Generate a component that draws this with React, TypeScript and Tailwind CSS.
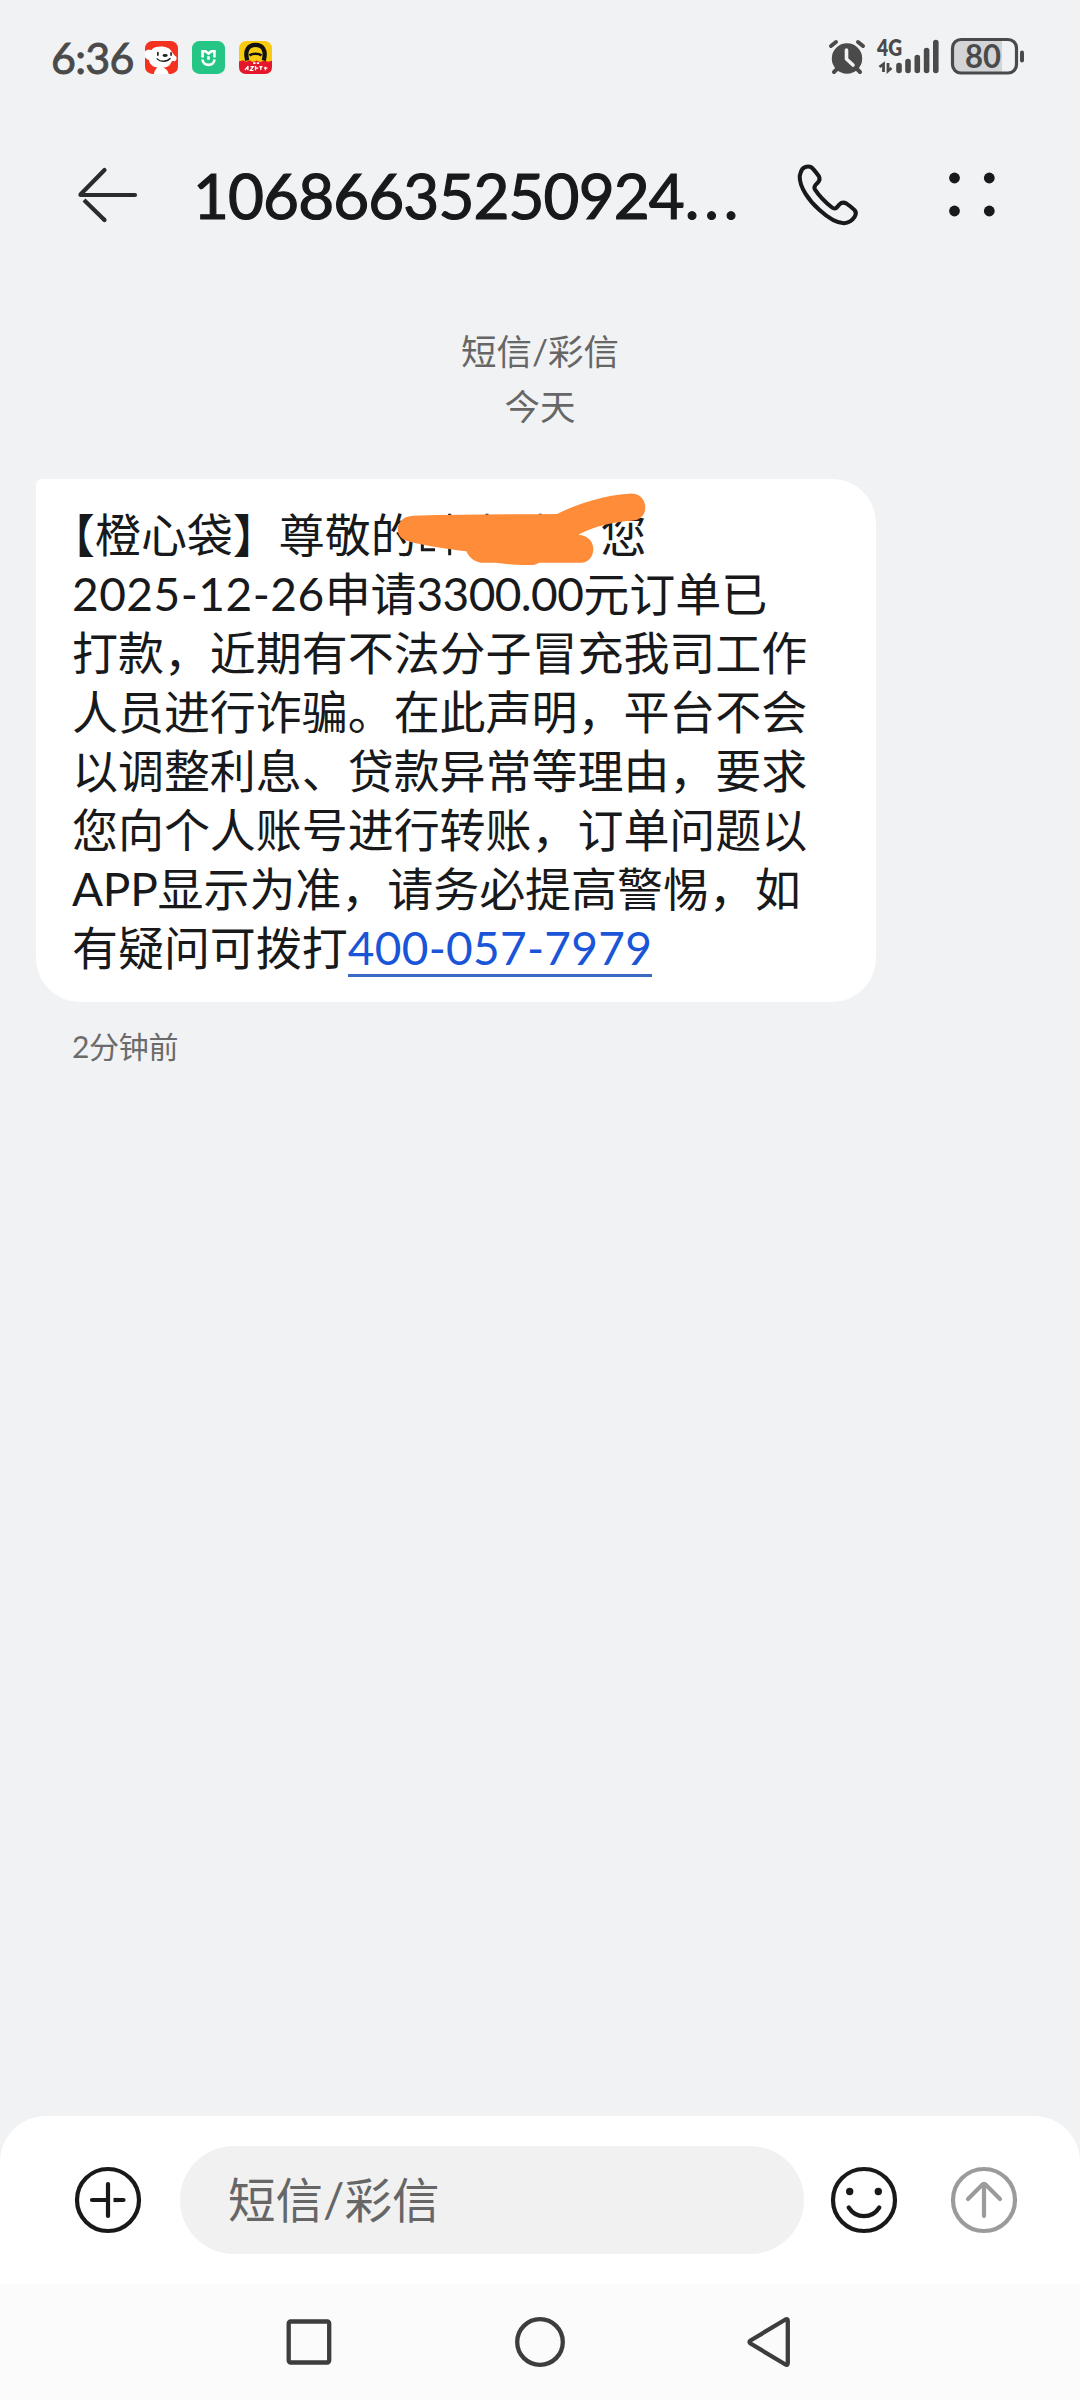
import React from 'react';

const MESSAGE_LINES: { text: string; className: string }[][] = [
  [{ text: '2025-12-26', className: 'tracking-[0.5px]' }, { text: '申请', className: '' }, { text: '3300.00', className: 'tracking-[-0.6px]' }, { text: '元订单已', className: '' }],
  [{ text: '打款，近期有不法分子冒充我司工作', className: '' }],
  [{ text: '人员进行诈骗。在此声明，平台不会', className: '' }],
  [{ text: '以调整利息、贷款异常等理由，要求', className: '' }],
  [{ text: '您向个人账号进行转账，订单问题以', className: '' }],
  [{ text: 'APP', className: 'tracking-[-0.3px]' }, { text: '显示为准，请务必提高警惕，如', className: '' }],
];

const StatusBar = () => (
  <div className="flex h-[116px] items-center justify-between pb-[2px] pl-[51px] pr-[56px] text-[#4a4a4a]">
    <div className="flex items-center">
      <span className="w-[93.500px] text-[43px] leading-none tracking-[-0.7px] [-webkit-text-stroke:0.9px_#4a4a4a]">6:36</span>
      <div className="flex gap-[14px]">
        <svg width="33" height="33" viewBox="0 0 100 100">
          <rect width="100" height="100" rx="22" fill="#f5311f" />
          <path d="M0 32C8 24 16 28 20 27C28 14 68 13 78 28C84 35 89 46 95 48C97 54 95 60 90 61C84 61 82 60 80 64C76 76 66 80 56 81C67 86 70 92 72 100H27C28 91 32 85 38 80C22 78 14 70 12 58C7 55 1 54 0 48Z" fill="#fff" />
          <ellipse cx="61" cy="44" rx="8" ry="4.500" fill="#222" />
          <path d="M39 35V43M79 36V43" stroke="#222" strokeWidth="5" strokeLinecap="round" />
          <path d="M37 54C46 64 67 64 76 53" fill="none" stroke="#222" strokeWidth="4" strokeLinecap="round" />
        </svg>
        <svg width="33" height="33" viewBox="0 0 100 100">
          <rect width="100" height="100" rx="22" fill="#25c685" />
          <path d="M32 50V31H41L50 38L59 31H68V50" fill="none" stroke="#fff" strokeWidth="8" />
          <path d="M32 56C32 78 68 78 68 56M50 46V57" fill="none" stroke="#fff" strokeWidth="8" />
        </svg>
        <svg width="33" height="33" viewBox="0 0 100 100">
          <rect width="100" height="100" rx="22" fill="#f9cb10" />
          <path d="M0 62L12 58L22 63L32 58L42 64L54 59L64 64L78 59L88 63L100 60V78Q100 100 78 100H22Q0 100 0 78Z" fill="#e5182b" />
          <path d="M25 59C16 26 30 12 50 12C70 12 84 26 75 59" fill="none" stroke="#111" strokeWidth="13" />
          <path d="M32 44C40 37 60 37 68 44" fill="none" stroke="#111" strokeWidth="8" />
          <path d="M35 31C42 24 58 24 65 31" fill="none" stroke="#f9cb10" strokeWidth="4" />
          <path d="M18 88L28 76M27 76V89M35 78H43L35 89H44M50 76V89M50 82H58M62 78H71M66 76V88M76 82H86M80 78V89" stroke="#fff" strokeWidth="4" />
          <path d="M43 67H50M54 67H61" stroke="#fff" strokeWidth="5" />
        </svg>
      </div>
    </div>

    <svg width="196" height="58" viewBox="828 28 196 58" fill="none" stroke="currentColor" strokeLinecap="round">
      <circle cx="847" cy="58.500" r="15.200" fill="currentColor" stroke="none" />
      <path d="M831 46L836 42M858 42L863 46M837 69L834 72M857 69L860 72" strokeWidth="4" />
      <path d="M846.500 50V59L853 65" stroke="#f1f2f4" strokeWidth="3.600" strokeLinejoin="round" />
      <text x="877" y="55.700" fontSize="22" fontWeight="800" stroke="none" fill="currentColor" textLength="25" lengthAdjust="spacingAndGlyphs">4G</text>
      <path d="M883.500 72V64L879.500 67M888 63V71L891.500 68" strokeWidth="2.800" strokeLinecap="butt" />
      <path d="M899 65.500V70.500M908 61.500V70.500M917.300 57.500V70.500M926.600 50.500V70.500M935.800 42.500V70.500" strokeWidth="5.600" />
      <path d="M961 41H1002V72H961Q954 72 954 65V48Q954 41 961 41Z" fill="#d3d4d5" stroke="none" />
      <rect x="952.500" y="39.500" width="64" height="33.500" rx="8.500" strokeWidth="3.200" />
      <path d="M1022 52.500V60.500" strokeWidth="4" />
      <text x="965" y="67.500" fontSize="32" fontWeight="700" stroke="none" fill="currentColor" textLength="36" lengthAdjust="spacingAndGlyphs">80</text>
    </svg>
  </div>
);

const Header = () => (
  <header className="flex h-[158px] items-center pl-[76px] pr-[83px] text-[#18191b]">
    <svg width="64" height="60" viewBox="76 165 64 60" fill="none" stroke="#2a2b2d" strokeWidth="4.200" strokeLinecap="round" strokeLinejoin="round">
      <path d="M104.500 170L80.500 194.500V195H135" />
      <path d="M104.500 220L84 200" strokeLinecap="butt" />
      <path d="M104.500 220L104 219.500" />
    </svg>
    <h1 className="ml-[53px] w-[603px] whitespace-nowrap text-[62px] leading-none tracking-[-0.9px] [-webkit-text-stroke:1.2px_#18191b]">
      10686635250924<span className="ml-px tracking-[4.800px]">...</span>
    </h1>
    <svg width="64" height="64" viewBox="770 100 190 190" fill="none" stroke="currentColor" strokeWidth="12" strokeLinejoin="round">
      <path d="M784 128C788 112 804 107 816 113C823 119 831 130 838 139C842 146 839 153 835 158L828 165C824 170 823 173 826 178C839 198 858 217 877 232C882 236 888 236 892 231L899 223C905 217 913 217 919 220C928 226 936 232 944 240C949 246 948 254 944 260C936 272 925 278 912 279C890 278 864 262 839 239C808 211 780 172 781 139Z" />
    </svg>
    <svg className="ml-auto" width="48" height="46" viewBox="949 171 48 46" fill="currentColor">
      <circle cx="954.500" cy="177" r="5.400" />
      <circle cx="989.300" cy="177" r="5.400" />
      <circle cx="954.500" cy="210" r="5.400" />
      <circle cx="989.300" cy="210" r="5.400" />
    </svg>
  </header>
);

const Bubble = () => (
  <div className="relative ml-9 h-[523px] w-[840px] rounded-[44px] rounded-tl-[6px] bg-white pl-9 pt-[26px] text-[46px] leading-[59px] tracking-[-0.05px] whitespace-nowrap text-[#18191b]">
    <p className="flex">
      <span className="-ml-[23px]">【橙心袋】尊敬的</span>
      <span className="ml-[184px]">您</span>
    </p>
    {MESSAGE_LINES.map((line, i) => (
      <p key={i}>
        {line.map((part, j) => (
          <span key={j} className={part.className}>{part.text}</span>
        ))}
      </p>
    ))}
    <p className="flex">
      有疑问可拨打
      <a className="h-[59px] border-b-[3px] border-[#3a6bc4] tracking-[0.3px] text-[#1a55d8]">400-057-7979</a>
    </p>

    {/* marker stroke over the recipient */}
    <svg className="absolute left-[360px] top-[13px]" width="250" height="75" viewBox="45 95 750 225">
      <path d="M124 250V268H162M206 160V285M318 160V180M478 160V180" fill="none" stroke="#18191b" strokeWidth="9" />
      <path d="M50 207C51 184 66 168 98 166C230 163 380 162 528 161C580 135 660 105 745 100C775 98 791 115 793 140C793 165 778 180 752 181C700 185 645 195 592 223C622 226 637 243 637 268C635 291 622 306 600 307H474C462 314 452 315 438 314C400 314 370 310 345 307H300C276 303 264 290 256 273C200 265 145 258 98 247C65 242 50 228 50 207Z" fill="#ff8c38" />
    </svg>
  </div>
);

const Composer = () => (
  <div className="flex h-[168px] items-center rounded-t-[46px] bg-white pl-[74px] pr-[62px] text-[#18191b]">
    <svg width="68" height="68" viewBox="-34 -34 68 68" fill="none" stroke="currentColor" strokeWidth="4.200" strokeLinecap="round">
      <circle r="31" />
      <path d="M0 -16V16M-16 0H0M15.500 0H8" />
      <path d="M10 0H5.500" strokeLinecap="butt" />
    </svg>
    <div className="ml-[38px] flex h-[108px] w-[624px] items-center rounded-full bg-[#f1f1f1] pl-12 text-[47.500px] leading-none text-[#666]">
      短信/彩信
    </div>
    <svg className="ml-[26px]" width="68" height="68" viewBox="-34 -34 68 68" fill="none" stroke="currentColor" strokeWidth="4.200" strokeLinecap="round">
      <circle r="31" />
      <circle cx="-14.300" cy="-8.500" r="3.700" fill="currentColor" stroke="none" />
      <circle cx="14.300" cy="-8.500" r="3.700" fill="currentColor" stroke="none" />
      <path d="M-15.300 7.500C-8 19 8 19 15.300 7.500" />
    </svg>
    <svg className="ml-auto" width="68" height="68" viewBox="-34 -34 68 68" fill="none" stroke="#9b9b9b" strokeWidth="4.200" strokeLinecap="round" strokeLinejoin="round">
      <circle r="31" />
      <path d="M0 16V-16M-16 -1L-1.500 -15.500Q0 -16.500 1.500 -15.500L16 -1" />
    </svg>
  </div>
);

const NavBar = () => (
  <nav className="flex h-[116px] items-center justify-center bg-[#fbfbfb]">
    <svg width="504" height="54" viewBox="288 2315 504 54" overflow="visible" fill="none" stroke="#3d3d3d" strokeWidth="4.300" strokeLinejoin="round">
      <rect x="288.700" y="2321.500" width="40.500" height="41" rx="2" />
      <circle cx="540" cy="2342" r="22.800" />
      <path d="M785.500 2319.500Q787.800 2318.500 787.800 2321V2363Q787.800 2365.500 785.500 2364.500L750.500 2343.500Q748.500 2342 750.500 2340.500Z" />
    </svg>
  </nav>
);

export default function App() {
  return (
    <div className="flex h-[2400px] w-[1080px] flex-col overflow-hidden bg-[#f1f2f4] font-['Lato','Noto_Sans_CJK_SC',sans-serif]">
      <StatusBar />
      <Header />
      <main className="flex flex-1 flex-col">
        <div className="pt-[50px] text-center text-[35.500px] leading-[55px] text-[#666]">
          <p>短信/彩信</p>
          <p>今天</p>
        </div>
        <div className="h-[45px]" />
        <Bubble />
        <p className="ml-[72px] mt-[26px] text-[30px] leading-9 tracking-[-0.3px] text-[#6b6b6b]">2分钟前</p>
      </main>
      <Composer />
      <NavBar />
    </div>
  );
}
